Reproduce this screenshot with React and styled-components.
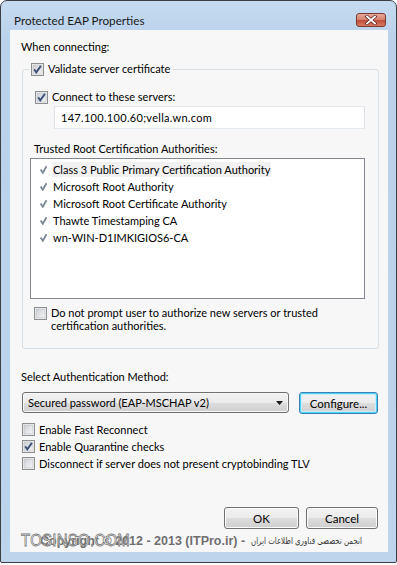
import React from 'react';
import styled, { createGlobalStyle } from 'styled-components';

const Global = createGlobalStyle`
  html, body { margin: 0; padding: 0; background: #ffffff; }
  body { font-family: Lato, "Noto Sans", sans-serif; font-size: 11px; color: #000; }
  * { box-sizing: border-box; }
`;

const Window = styled.div`
  width: 397px;
  height: 563px;
  border: 1px solid #3b3f44;
  border-radius: 7px 7px 2px 2px;
  background: linear-gradient(180deg, #c6dbf0 0px, #b9d1ea 40px, #bcd4ec 100%);
  display: flex;
  flex-direction: column;
  overflow: hidden;
`;

const TitleBar = styled.div`
  height: 29px;
  flex: none;
  display: flex;
  justify-content: space-between;
  align-items: flex-start;
  padding: 0 10px 0 13px;
`;

const Title = styled.div`
  margin-top: 11px;
  line-height: 16px;
  font-size: 11.7px;
  color: #1a1a1a;
`;

const CloseButton = styled.div`
  margin-top: 12px;
  width: 30px;
  height: 14px;
  border: 1px solid #7a3a33;
  border-radius: 3px;
  background: linear-gradient(180deg, #e9a897 0%, #d78371 45%, #c04e3c 55%, #d97a62 100%);
  display: flex;
  align-items: center;
  justify-content: center;
`;

const Client = styled.div`
  flex: 1;
  margin: 0 8px 10px 9px;
  background: #f7f7f7;
  padding: 9px 9px 0 11px;
  display: flex;
  flex-direction: column;
`;

const Label = styled.div`
  line-height: 16px;
  white-space: nowrap;
  margin-left: ${p => p.$indent || 0}px;
  margin-top: ${p => p.$top || 0}px;
`;

const Group = styled.fieldset`
  margin: 6px 0 0 1px;
  padding: 0 13px 16px 12px;
  border: 1px solid #d5dfe5;
  border-radius: 3px;
  min-width: 0;
`;

const Legend = styled.legend`
  margin-left: -6px;
  padding: 0 3px 0 2px;
`;

const CheckRow = styled.label`
  display: flex;
  align-items: ${p => (p.$top ? 'flex-start' : 'center')};
  gap: 4px;
  height: ${p => (p.$h ? `${p.$h}px` : 'auto')};
  margin-top: ${p => p.$mt || 0}px;
  margin-left: ${p => p.$ml || 0}px;
  line-height: 16px;
  white-space: nowrap;
`;

const BoxSvg = styled.svg`
  flex: none;
  display: block;
`;

const WrapText = styled.span`
  white-space: normal;
  line-height: 13px;
  margin-top: -1px;
`;

const Input = styled.div`
  margin: 1px 0 0 19px;
  height: 23px;
  border: 1px solid #abadb3;
  border-top-color: #e3e9ef;
  border-left-color: #e2e3ea;
  border-right-color: #dbdfe6;
  border-bottom-color: #e3e9ef;
  background: #ffffff;
  display: flex;
  align-items: center;
  padding-left: 6px;
  letter-spacing: 0.3px;
`;

const List = styled.div`
  margin: 1px 0 0 -5px;
  height: 141px;
  border: 1px solid #828790;
  background: #ffffff;
  padding: 2px 0 0 0;
`;

const ListItem = styled.div`
  display: flex;
  align-items: center;
  height: 17px;
  padding-left: 9px;
  gap: 5px;
`;

const ItemText = styled.span`
  padding: 0 1px;
  background: ${p => (p.$hl ? '#f1f1f1' : 'transparent')};
  line-height: 15px;
`;

const MethodRow = styled.div`
  display: flex;
  gap: 10px;
  margin: 7px 0 0 1px;
`;

const Select = styled.div`
  width: 267px;
  height: 21px;
  border: 1px solid #707070;
  border-radius: 3px;
  background: linear-gradient(180deg, #f2f2f2 0%, #ebebeb 50%, #dddddd 51%, #cfcfcf 100%);
  box-shadow: inset 0 0 0 1px #f8f8f8;
  display: flex;
  align-items: center;
  justify-content: space-between;
  padding: 0 5px 0 5px;
`;

const Button = styled.div`
  width: ${p => p.$w}px;
  height: 22px;
  border: 1px solid ${p => (p.$default ? '#3c7fb1' : '#707070')};
  border-radius: 3px;
  background: linear-gradient(180deg, #f2f2f2 0%, #ebebeb 50%, #dddddd 51%, #cfcfcf 100%);
  box-shadow: ${p => (p.$default ? 'inset 0 0 0 1px #48d2f8, inset 0 0 0 2px #c9eefb' : 'inset 0 0 0 1px #fcfcfc')};
  display: flex;
  align-items: center;
  justify-content: center;
  font-size: 11.5px;
`;

const Options = styled.div`
  display: flex;
  flex-direction: column;
  margin: 7px 0 0 1px;
`;

const Footer = styled.div`
  margin-top: auto;
  display: flex;
  justify-content: flex-end;
  gap: 7px;
  padding-right: 1px;
`;

const Copyright = styled.div`
  position: relative;
  height: 23px;
  display: flex;
  align-items: center;
  gap: 6px;
  padding-left: 19px;
  white-space: nowrap;
`;

const CopyEn = styled.span`
  font-family: "Liberation Sans", Arial, sans-serif;
  font-weight: bold;
  font-size: 12.5px;
  color: #6e6e6e;
  text-shadow: 0 0 1px #ffffff;
`;

const CopyFa = styled.span`
  display: inline-block;
  font-family: "DejaVu Sans", "Noto Sans", sans-serif;
  font-size: 9.5px;
  color: #3a3a3a;
  direction: rtl;
  transform: scaleX(0.74);
  transform-origin: left center;
`;

const Watermark = styled.div`
  position: absolute;
  left: 0;
  top: 2px;
  font-family: "Liberation Sans", Arial, sans-serif;
  font-size: 17px;
  letter-spacing: 0.3px;
  color: #ffffff;
  -webkit-text-stroke: 0.8px #6d6d6d;
  transform: scaleX(0.88);
  transform-origin: left center;
  opacity: 0.9;
`;

const Check = ({ checked }) => (
  <BoxSvg width="13" height="13" viewBox="0 0 13 13">
    <defs>
      <linearGradient id="cbg" x1="0" y1="0" x2="1" y2="1">
        <stop offset="0" stopColor="#cbcfd5" />
        <stop offset="1" stopColor="#f6f6f6" />
      </linearGradient>
    </defs>
    <rect x="0.5" y="0.5" width="12" height="12" fill="#f4f4f4" stroke="#8e8f8f" />
    <rect x="2" y="2" width="9" height="9" fill="url(#cbg)" stroke="#b9bcc0" strokeWidth="0.6" />
    {checked && (
      <path d="M3.2 6.4 L5.3 9.3 L9.9 2.9" fill="none" stroke="#3f5378" strokeWidth="1.9" strokeLinejoin="miter" />
    )}
  </BoxSvg>
);

const Tick = () => (
  <BoxSvg width="7" height="9" viewBox="0 0 7 9">
    <path d="M0.7 4.6 L2.8 7.8 L6.5 1.2" fill="none" stroke="#7c8998" strokeWidth="1.8" />
  </BoxSvg>
);

const CloseX = () => (
  <svg width="12" height="10" viewBox="0 0 12 10">
    <path d="M2 1.5 L10 8.5 M10 1.5 L2 8.5" stroke="#5a2520" strokeWidth="3.2" strokeLinecap="square" />
    <path d="M2 1.5 L10 8.5 M10 1.5 L2 8.5" stroke="#ffffff" strokeWidth="1.8" strokeLinecap="square" />
  </svg>
);

const Arrow = () => (
  <svg width="7" height="4" viewBox="0 0 7 4">
    <path d="M0 0 H7 L3.5 4 Z" fill="#1a1a1a" />
  </svg>
);

const authorities = [
  'Class 3 Public Primary Certification Authority',
  'Microsoft Root Authority',
  'Microsoft Root Certificate Authority',
  'Thawte Timestamping CA',
  'wn-WIN-D1IMKIGIOS6-CA',
];

export default function App() {
  return (
    <>
      <Global />
      <Window>
        <TitleBar>
          <Title>Protected EAP Properties</Title>
          <CloseButton>
            <CloseX />
          </CloseButton>
        </TitleBar>
        <Client>
          <Label>When connecting:</Label>
          <Group>
            <Legend>
              <CheckRow>
                <Check checked />
                <span>Validate server certificate</span>
              </CheckRow>
            </Legend>
            <CheckRow $mt={12}>
              <Check checked />
              <span>Connect to these servers:</span>
            </CheckRow>
            <Input>147.100.100.60;vella.wn.com</Input>
            <Label $top={12} $indent={-1}>Trusted Root Certification Authorities:</Label>
            <List>
              {authorities.map((a, i) => (
                <ListItem key={a}>
                  <Tick />
                  <ItemText $hl={i === 0}>{a}</ItemText>
                </ListItem>
              ))}
            </List>
            <CheckRow $top $mt={8} $ml={-1}>
              <Check />
              <WrapText>
                Do not prompt user to authorize new servers or trusted
                <br />
                certification authorities.
              </WrapText>
            </CheckRow>
          </Group>
          <Label $top={20}>Select Authentication Method:</Label>
          <MethodRow>
            <Select>
              <span>Secured password (EAP-MSCHAP v2)</span>
              <Arrow />
            </Select>
            <Button $w={79} $default>Configure...</Button>
          </MethodRow>
          <Options>
            <CheckRow $h={17}>
              <Check />
              <span>Enable Fast Reconnect</span>
            </CheckRow>
            <CheckRow $h={17}>
              <Check checked />
              <span>Enable Quarantine checks</span>
            </CheckRow>
            <CheckRow $h={17}>
              <Check />
              <span>Disconnect if server does not present cryptobinding TLV</span>
            </CheckRow>
          </Options>
          <Footer>
            <Button $w={75}>OK</Button>
            <Button $w={72}>Cancel</Button>
          </Footer>
          <Copyright>
            <CopyEn>Copyright © 2012 - 2013 (ITPro.ir) -</CopyEn>
            <CopyFa>انجمن تخصصی فناوری اطلاعات ایران</CopyFa>
            <Watermark>TOSINSO.COM</Watermark>
          </Copyright>
        </Client>
      </Window>
    </>
  );
}
